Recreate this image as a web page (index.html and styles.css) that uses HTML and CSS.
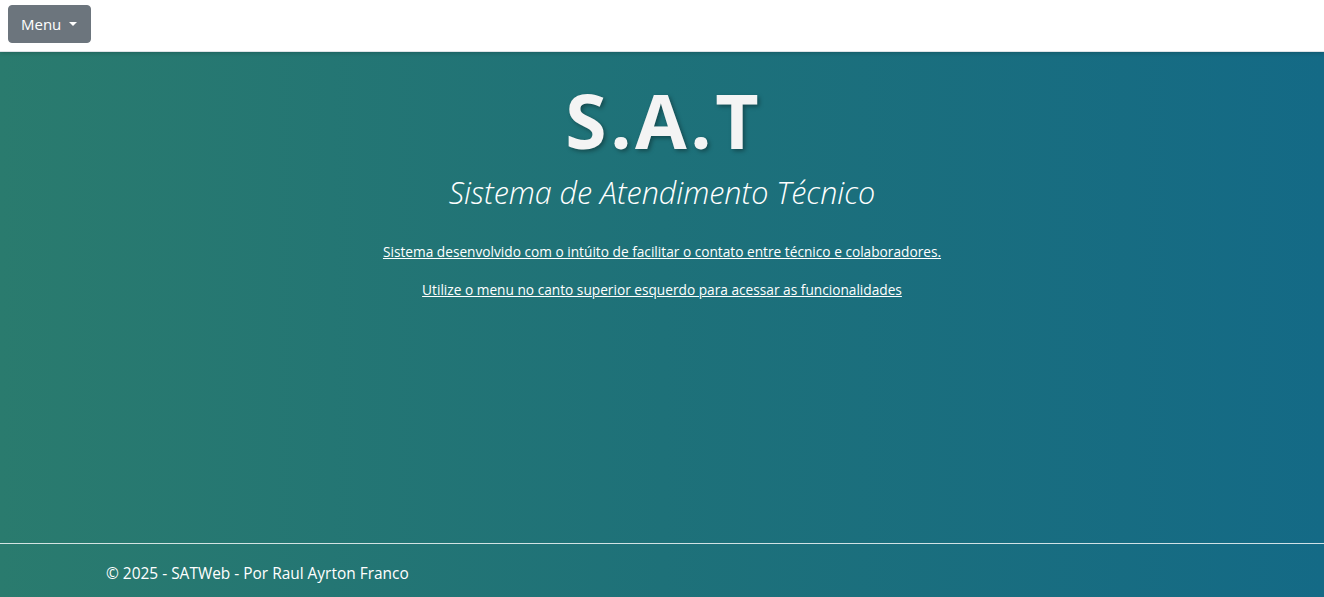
FILE: index.html
```html
<!DOCTYPE html>
<html lang="pt-BR">
<head>
<meta charset="utf-8">
<title>SATWeb</title>
<link rel="stylesheet" href="styles.css">
</head>
<body>
<header class="navbar">
  <button class="menu-btn" type="button">Menu <span class="caret"></span></button>
</header>
<main class="main">
  <section class="hero">
    <h1 class="title">S.A.T</h1>
    <p class="subtitle">Sistema de Atendimento Técnico</p>
    <p class="info"><a href="#">Sistema desenvolvido com o intúito de facilitar o contato entre técnico e colaboradores.</a></p>
    <p class="info"><a href="#">Utilize o menu no canto superior esquerdo para acessar as funcionalidades</a></p>
  </section>
  <footer class="footer">
    <div class="footer-inner">© 2025 - SATWeb - Por Raul Ayrton Franco</div>
  </footer>
</main>
</body>
</html>
```
FILE: styles.css
```css
* { box-sizing: border-box; }
html, body { height: 100%; }
body {
  margin: 0;
  font-family: "Open Sans", "Noto Sans", sans-serif;
  display: flex;
  flex-direction: column;
  background: #fff;
}
.navbar {
  height: 52px;
  flex: 0 0 52px;
  background: #fff;
  border-bottom: 1px solid #dee2e6;
  padding: 5px 8px;
  position: relative;
  z-index: 2;
  box-shadow: 0 1px 4px rgba(0,0,0,0.2);
}
.menu-btn {
  height: 38px;
  width: 83px;
  background: #6c757d;
  color: #fff;
  border: 1px solid #6c757d;
  border-radius: 4px;
  font-family: "Open Sans", "Noto Sans", sans-serif;
  font-size: 15px;
  padding: 0 12px;
  display: flex;
  align-items: center;
  gap: 8px;
}
.caret {
  width: 0; height: 0;
  border-left: 4px solid transparent;
  border-right: 4px solid transparent;
  border-top: 4px solid #fff;
}
.main {
  flex: 1;
  display: flex;
  flex-direction: column;
  background: linear-gradient(90deg, #2a7b6e 0%, #1e7179 50%, #146a86 100%);
  color: #fff;
}
.hero {
  flex: 1;
  text-align: center;
  padding-top: 26px;
}
.title {
  margin: 0;
  font-size: 75px;
  font-weight: 700;
  line-height: 84px;
  color: #f4f4f4;
  text-shadow: 2px 2px 4px rgba(0,0,0,0.35);
  letter-spacing: 3.5px;
  text-indent: 3.5px;
}
.subtitle {
  margin: 10px 0 29px;
  font-size: 30.5px;
  font-weight: 300;
  font-style: italic;
  line-height: 40px;
}
.info {
  margin: 0 0 16px;
  font-size: 13.7px;
  line-height: 22px;
}
.info a { color: #fff; text-decoration: underline; }
.footer {
  border-top: 1px solid rgba(255,255,255,0.8);
  height: 54px;
  flex: 0 0 54px;
}
.footer-inner {
  padding: 18px 0 0 106px;
  font-size: 15.45px;
  line-height: 22px;
}
```
